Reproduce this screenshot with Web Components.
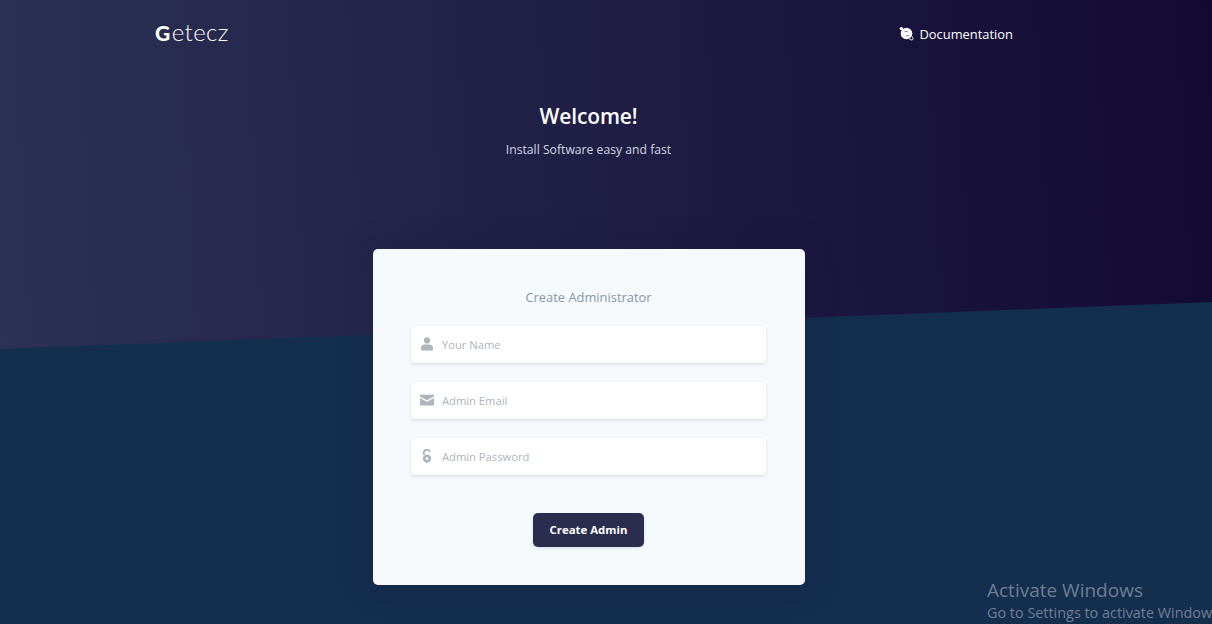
<!DOCTYPE html>
<html lang="en">
<head>
<meta charset="utf-8">
<title>Getecz</title>
<style>
  html, body { margin: 0; height: 100%; overflow: hidden; }
  body { font-family: "Open Sans", "Liberation Sans", sans-serif; background: #142e4e; }
</style>
</head>
<body>
<install-page>
  <top-bar></top-bar>
  <hero-text heading="Welcome!" sub="Install Software easy and fast"></hero-text>
  <install-card heading="Create Administrator">
    <icon-field placeholder="Your Name" icon="user"></icon-field>
    <icon-field placeholder="Admin Email" icon="mail"></icon-field>
    <icon-field placeholder="Admin Password" icon="lock"></icon-field>
    <span slot="action">Create Admin</span>
  </install-card>
</install-page>
<script>
class InstallPage extends HTMLElement {
  constructor() {
    super();
    this.attachShadow({ mode: "open" });
  }

  connectedCallback() {
    this.shadowRoot.innerHTML = `
      <style>
        :host {
          display: block;
          position: relative;
          width: 1212px;
          height: 624px;
          overflow: hidden;
          background: #142e4e;
        }
        .sky {
          position: absolute;
          inset: 0;
          background: linear-gradient(87deg, #2c3254 0%, #130a34 100%);
          clip-path: polygon(0 0, 100% 0, 100% 302px, 0 349px);
        }
        .content {
          position: relative;
          display: flex;
          flex-direction: column;
          height: 100%;
        }
        .watermark {
          position: absolute;
          left: 987px;
          top: 578px;
          width: 225px;
          overflow: hidden;
          white-space: nowrap;
          color: #6f7f94;
          font-family: "Open Sans", sans-serif;
        }
        .watermark b { display: block; font-weight: 400; font-size: 19px; line-height: 25px; }
        .watermark span { display: block; font-size: 14.4px; line-height: 20px; }
      </style>
      <div class="sky"></div>
      <div class="content"><slot></slot></div>
      <div class="watermark"><b>Activate Windows</b><span>Go to Settings to activate Windows.</span></div>
    `;
  }
}

class TopBar extends HTMLElement {
  constructor() {
    super();
    this.attachShadow({ mode: "open" });
  }

  connectedCallback() {
    this.shadowRoot.innerHTML = `
      <style>
        :host {
          display: flex;
          justify-content: space-between;
          align-items: center;
          height: 67px;
          padding: 0 199px 0 155px;
          color: #fff;
        }
        .logo {
          display: flex;
          align-items: baseline;
          margin-top: -4px;
          font-family: "Lato", sans-serif;
          font-size: 24px;
          font-weight: 300;
          line-height: 1;
          letter-spacing: 0.4px;
        }
        .logo b { font-weight: 900; font-size: 21px; letter-spacing: 0; margin-right: 1.5px; }
        .docs {
          display: flex;
          align-items: center;
          gap: 5px;
          font-size: 12.9px;
          font-weight: 400;
        }
      </style>
      <div class="logo"><b>G</b>etecz</div>
      <div class="docs">
        <svg width="16" height="15" viewBox="0 0 16 15">
          <circle cx="8.500" cy="7.500" r="5.800" fill="#fff"/>
          <circle cx="3.400" cy="2.600" r="1.700" fill="#fff"/>
          <path d="M14 10.400c1.200 1.800 1.200 3 .3 3.400-.7.300-1.800 0-3-.7" fill="none" stroke="#fff" stroke-width="1"/>
          <path d="M6.500 5.900c1.200-.8 2.600-.6 3.200.2M8.100 9.900c1 .3 2 0 2.600-.8" fill="none" stroke="#8a86a0" stroke-width="1.100"/>
        </svg>
        <span>Documentation</span>
      </div>
    `;
  }
}

class HeroText extends HTMLElement {
  constructor() {
    super();
    this.attachShadow({ mode: "open" });
  }

  connectedCallback() {
    this.shadowRoot.innerHTML = `
      <style>
        :host {
          display: block;
          width: 1177px;
          height: 182px;
          padding-top: 33px;
          box-sizing: border-box;
          text-align: center;
        }
        h1 {
          margin: 0;
          color: #fff;
          font-size: 21px;
          font-weight: 600;
          line-height: 32px;
          letter-spacing: -0.15px;
        }
        p {
          margin: 8px 0 0;
          color: #d2d6e2;
          font-size: 12.2px;
          line-height: 20px;
        }
      </style>
      <h1>${this.getAttribute("heading")}</h1>
      <p>${this.getAttribute("sub")}</p>
    `;
  }
}

class InstallCard extends HTMLElement {
  constructor() {
    super();
    this.attachShadow({ mode: "open" });
  }

  connectedCallback() {
    this.shadowRoot.innerHTML = `
      <style>
        :host {
          display: block;
          box-sizing: border-box;
          width: 432px;
          height: 336px;
          margin-left: 373px;
          padding: 38px 39px 0 38px;
          background: #f6fafd;
          border-radius: 5px;
          box-shadow: 0 0 32px rgba(20, 20, 70, .28);
        }
        h2 {
          margin: 0 0 19px;
          color: #8898aa;
          font-size: 12.9px;
          font-weight: 400;
          line-height: 20px;
          text-align: center;
        }
        .fields {
          display: flex;
          flex-direction: column;
          gap: 19px;
        }
        .actions {
          display: flex;
          justify-content: center;
          margin-top: 38px;
        }
        button {
          width: 111px;
          height: 34px;
          padding: 0 0 2px;
          border: 0;
          border-radius: 5px;
          background: #2b2d4f;
          color: #fff;
          font: 700 11.4px "Open Sans", sans-serif;
          box-shadow: 0 1px 3px rgba(50, 50, 93, .15);
        }
      </style>
      <h2>${this.getAttribute("heading")}</h2>
      <div class="fields"><slot></slot></div>
      <div class="actions"><button type="button"><slot name="action"></slot></button></div>
    `;
  }
}

const FIELD_ICONS = {
  user: `<svg width="12" height="14" viewBox="0 0 12 14"><circle cx="6" cy="3.400" r="3.100" fill="currentColor"/><path d="M0 13.600V11c0-2 1.800-3.400 3.400-3.400h5.200C10.200 7.600 12 9 12 11v2.600z" fill="currentColor"/></svg>`,
  mail: `<svg width="14" height="12" viewBox="0 0 14 12"><path d="M0 .8h14v1.700L7 6.300 0 2.500z" fill="currentColor"/><path d="M0 4l7 3.800L14 4v7.400H0z" fill="currentColor"/></svg>`,
  lock: `<svg width="10" height="14" viewBox="0 0 10 14"><path d="M1.800 6V3.600C1.800 1.800 3.200.8 5 .8c1.500 0 2.700.8 3 2.200" fill="none" stroke="currentColor" stroke-width="1.800"/><path fill-rule="evenodd" d="M5 5.400a4.200 4.200 0 1 1 0 8.400 4.200 4.200 0 0 1 0-8.400zm0 2.800a1.400 1.400 0 1 0 0 2.800 1.400 1.400 0 0 0 0-2.800z" fill="currentColor"/></svg>`,
};

class IconField extends HTMLElement {
  constructor() {
    super();
    this.attachShadow({ mode: "open" });
  }

  connectedCallback() {
    this.shadowRoot.innerHTML = `
      <style>
        :host {
          display: flex;
          align-items: center;
          box-sizing: border-box;
          height: 37px;
          background: #fff;
          border-radius: 4px;
          box-shadow: 0 1px 3px rgba(50, 50, 93, .15), 0 1px 0 rgba(0, 0, 0, .02);
        }
        .icon {
          display: flex;
          justify-content: center;
          width: 31px;
          margin-top: -2px;
          color: #adb5bd;
        }
        input {
          flex: 1;
          min-width: 0;
          padding: 0;
          border: 0;
          outline: 0;
          background: none;
          font: 400 11.2px "Open Sans", sans-serif;
        }
        input::placeholder { color: #adb5bd; opacity: 1; }
      </style>
      <span class="icon">${FIELD_ICONS[this.getAttribute("icon")]}</span>
      <input type="text" placeholder="${this.getAttribute("placeholder")}">
    `;
  }
}

customElements.define("install-page", InstallPage);
customElements.define("top-bar", TopBar);
customElements.define("hero-text", HeroText);
customElements.define("install-card", InstallCard);
customElements.define("icon-field", IconField);
</script>
</body>
</html>
